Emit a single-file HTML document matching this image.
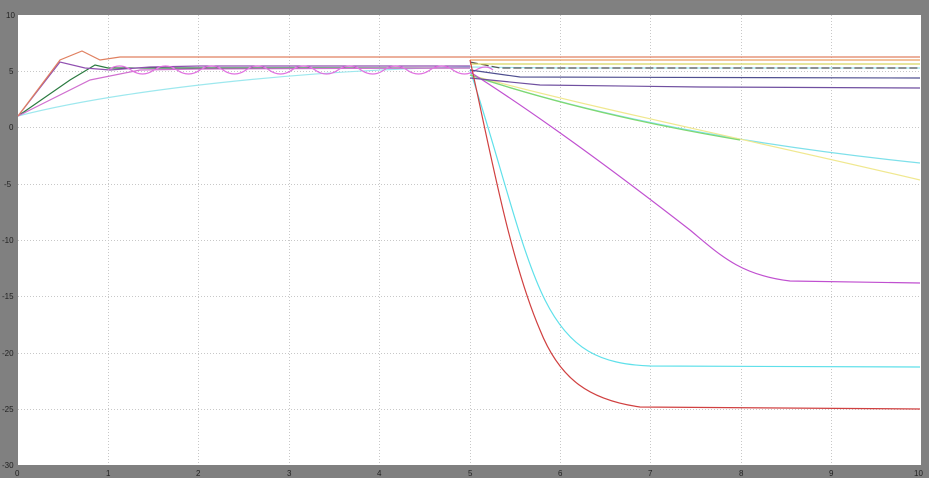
<!DOCTYPE html>
<html><head><style>
html,body{margin:0;padding:0;background:#7f7f7f;width:929px;height:478px;overflow:hidden}
svg{display:block}
text{font-family:"Liberation Sans",sans-serif;font-size:8px;fill:#222}
</style></head><body>
<svg width="929" height="478" viewBox="0 0 929 478">
<rect x="0" y="0" width="929" height="478" fill="#808080"/>
<rect x="18" y="15" width="903" height="450" fill="#fff"/>
<g stroke="#c8c8c8" stroke-width="1" stroke-dasharray="1,2">
<line x1="108.5" y1="15" x2="108.5" y2="465"/><line x1="198.5" y1="15" x2="198.5" y2="465"/>
<line x1="289.5" y1="15" x2="289.5" y2="465"/><line x1="379.5" y1="15" x2="379.5" y2="465"/>
<line x1="470.5" y1="15" x2="470.5" y2="465"/><line x1="560.5" y1="15" x2="560.5" y2="465"/>
<line x1="650.5" y1="15" x2="650.5" y2="465"/><line x1="741.5" y1="15" x2="741.5" y2="465"/>
<line x1="831.5" y1="15" x2="831.5" y2="465"/>
<line x1="18" y1="71.5" x2="921" y2="71.5"/><line x1="18" y1="127.5" x2="921" y2="127.5"/>
<line x1="18" y1="184.5" x2="921" y2="184.5"/><line x1="18" y1="240.5" x2="921" y2="240.5"/>
<line x1="18" y1="296.5" x2="921" y2="296.5"/><line x1="18" y1="353.5" x2="921" y2="353.5"/>
<line x1="18" y1="409.5" x2="921" y2="409.5"/>
</g>
<g fill="none" stroke-width="1.2">
<path d="M18,116 C120,90 300,70 470,67 L560,68 L920,68" stroke="#9ee8ee"/>
<path d="M470,70 C500,160 520,250 545,300 C570,350 600,364 650,366 L920,367" stroke="#5fe0ea"/>
<path d="M470,75 C560,105 700,140 920,163" stroke="#7ee0ea"/>
<path d="M470,75 C600,110 750,140 920,180" stroke="#f0e890"/>
<path d="M470,75 C560,105 650,125 740,140" stroke="#80d870"/>
<path d="M18,116 L70,80 L95,65 L108,68 L470,68" stroke="#2a7a40"/>
<path d="M18,116 L90,80 L140,70 L200,69 L470,68" stroke="#d070d0"/>
<path d="M470,72 C530,110 600,160 690,230 C720,255 740,275 790,281 L920,283" stroke="#c050d0"/>
<path d="M18,116 L60,62 L85,68 L110,70 L150,67 L200,66 L470,66" stroke="#9050b0"/>
<path d="M108,70 q11.5,-8 23,0 q11.5,8 23,0 q11.5,-8 23,0 q11.5,8 23,0 q11.5,-8 23,0 q11.5,8 23,0 q11.5,-8 23,0 q11.5,8 23,0 q11.5,-8 23,0 q11.5,8 23,0 q11.5,-8 23,0 q11.5,8 23,0 q11.5,-8 23,0 q11.5,8 23,0 q11.5,-8 23,0 q11.5,8 23,0 q10,-6 17,0" stroke="#e070e0"/>
<path d="M470,78 L540,85 L700,87 L920,88" stroke="#7050a0"/>
<path d="M470,70 L520,77 L920,78" stroke="#505090"/>
<path d="M470,62 L500,68 L920,68" stroke="#555" stroke-dasharray="8,3"/>
<path d="M470,60 L920,60" stroke="#e9a060"/>
<path d="M470,64 L920,64" stroke="#d8d860"/>
<path d="M18,116 L60,60 L82,51 L100,60 L120,57 L470,57 L920,57" stroke="#e08060"/>
<path d="M470,60 C490,150 510,260 540,330 C560,380 590,400 640,407 L920,409" stroke="#d04040"/>
</g>
<g>
<text x="6" y="18">10</text><text x="9" y="74">5</text><text x="9" y="130">0</text>
<text x="4" y="187">-5</text><text x="2" y="243">-10</text><text x="2" y="299">-15</text>
<text x="2" y="356">-20</text><text x="2" y="412">-25</text><text x="2" y="468">-30</text>
<text x="15" y="476">0</text><text x="106" y="476">1</text><text x="196" y="476">2</text>
<text x="287" y="476">3</text><text x="377" y="476">4</text><text x="468" y="476">5</text>
<text x="558" y="476">6</text><text x="648" y="476">7</text><text x="739" y="476">8</text>
<text x="829" y="476">9</text><text x="914" y="476">10</text>
</g>
</svg>
</body></html>
